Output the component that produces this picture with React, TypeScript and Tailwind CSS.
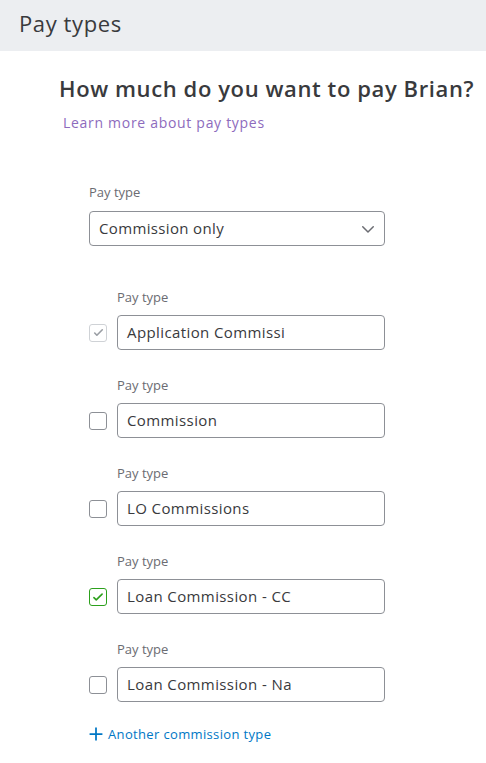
import { useState } from 'react';

type Row = { name: string; state: 'disabled' | 'off' | 'on' };

const initialRows: Row[] = [
  { name: 'Application Commissi', state: 'disabled' },
  { name: 'Commission', state: 'off' },
  { name: 'LO Commissions', state: 'off' },
  { name: 'Loan Commission - CC', state: 'on' },
  { name: 'Loan Commission - Na', state: 'off' },
];

function Check({ state, onClick }: { state: Row['state']; onClick: () => void }) {
  if (state === 'disabled') {
    return (
      <span className="w-[18px] h-[18px] shrink-0 rounded-[3px] border border-[#cfd2d6] flex items-center justify-center">
        <svg className="w-[13px] h-[13px] text-[#9a9ea4]" fill="none" viewBox="0 0 24 24" stroke="currentColor">
          <path strokeLinecap="round" strokeLinejoin="round" strokeWidth={3} d="M5 13l4 4L19 7" />
        </svg>
      </span>
    );
  }
  return (
    <button
      onClick={onClick}
      className={`w-[18px] h-[18px] shrink-0 rounded-[3px] border flex items-center justify-center bg-white ${
        state === 'on' ? 'border-[#2ca01c]' : 'border-[#8d9096]'
      }`}
    >
      {state === 'on' && (
        <svg className="w-[14px] h-[14px] text-[#2ca01c]" fill="none" viewBox="0 0 24 24" stroke="currentColor">
          <path strokeLinecap="round" strokeLinejoin="round" strokeWidth={2.75} d="M5 13l4 4L19 7" />
        </svg>
      )}
    </button>
  );
}

export default function App() {
  const [rows, setRows] = useState(initialRows);

  const toggle = (i: number) =>
    setRows(rows.map((r, j) => (j === i ? { ...r, state: r.state === 'on' ? 'off' : 'on' } : r)));

  return (
    <div className="w-[486px] h-[763px] bg-white text-[#393a3d] overflow-hidden" style={{ fontFamily: '"Open Sans", "Liberation Sans", sans-serif' }}>
      {/* Header */}
      <div className="h-[51px] bg-[#eceef1] flex items-center pl-[19px] pb-[5px]">
        <h1 className="text-[22px] tracking-[0.6px] leading-[30px] text-[#393a3d]">Pay types</h1>
      </div>

      <div className="pl-[59px] pt-[22px]">
        <h2 className="text-[22px] font-semibold tracking-[0.6px] leading-[30px] text-[#393a3d] whitespace-nowrap">How much do you want to pay Brian?</h2>
        <a className="block mt-[10px] ml-[4px] text-[14px] tracking-[0.7px] text-[#8d6bbd] leading-[20px]">Learn more about pay types</a>
      </div>

      <div className="ml-[89px] w-[296px]">
        {/* Pay type select */}
        <div className="mt-[50px] text-[13px] text-[#6b6c72] leading-[18px]">Pay type</div>
        <div className="mt-[10px] h-[35px] border border-[#8d9096] rounded-[4px] flex items-center justify-between pl-[9px] pr-[7px]">
          <span className="text-[15px] tracking-[0.35px] text-[#393a3d]">Commission only</span>
          <svg className="w-[18px] h-[18px] text-[#6b6c72]" fill="none" viewBox="0 0 24 24" stroke="currentColor">
            <path strokeLinecap="round" strokeLinejoin="round" strokeWidth={2} d="M5 9l7 7 7-7" />
          </svg>
        </div>

        {/* Commission rows */}
        <div className="mt-[42px] flex flex-col gap-[26px]">
          {rows.map((r, i) => (
            <div key={r.name}>
              <div className="pl-[28px] text-[13px] text-[#6b6c72] leading-[18px]">Pay type</div>
              <div className="mt-[9px] flex items-center gap-[10px]">
                <Check state={r.state} onClick={() => toggle(i)} />
                <div className="flex-1 h-[35px] border border-[#8d9096] rounded-[4px] flex items-center px-[9px]">
                  <span className="text-[15px] tracking-[0.4px] text-[#393a3d]">{r.name}</span>
                </div>
              </div>
            </div>
          ))}
        </div>

        <button className="mt-[23px] flex items-center gap-[5px] text-[13px] tracking-[0.35px] leading-[18px] text-[#0077c5]">
          <svg className="w-[14px] h-[14px]" fill="none" viewBox="0 0 24 24" stroke="currentColor">
            <path strokeWidth={3} d="M12 1v22M1 12h22" />
          </svg>
          <span>Another commission type</span>
        </button>
      </div>
    </div>
  );
}
